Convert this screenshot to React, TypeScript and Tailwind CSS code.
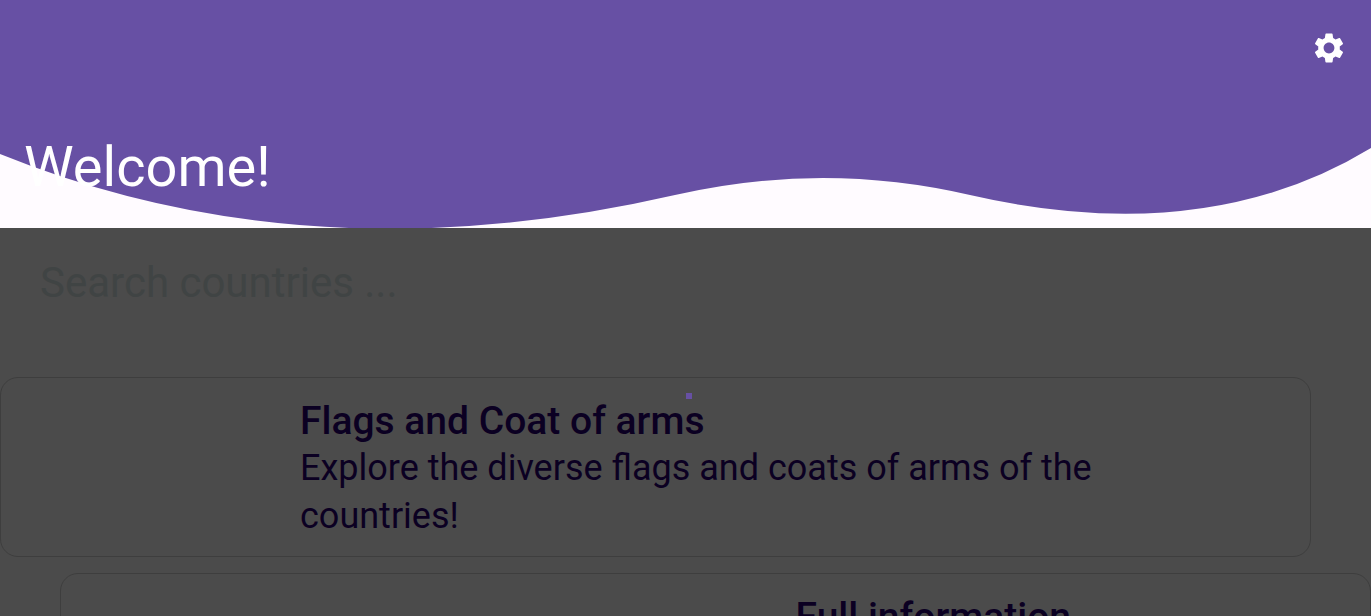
import { MdSettings } from "react-icons/md";

function Header() {
  return (
    <header className="relative h-[228px] shrink-0 bg-[#fffbff]">
      <svg
        className="absolute inset-0 h-full w-full"
        viewBox="0 0 1371 228"
        preserveAspectRatio="none"
        aria-hidden="true"
      >
        <path
          d="M0 0V154Q309 279 675 195Q823 161 970 195Q1205 249 1371 148V0Z"
          fill="#6750a4"
        />
      </svg>
      <div className="relative flex h-full flex-col items-stretch justify-between px-6 pt-[30px] pb-7">
        <button type="button" aria-label="Settings" className="self-end text-white">
          <MdSettings size={36} />
        </button>
        <h1 className="text-[56px] leading-[66px] text-white">Welcome!</h1>
      </div>
    </header>
  );
}

export default function App() {
  return (
    <div className="relative flex h-screen flex-col overflow-hidden bg-[#4b4b4b] font-['Roboto',sans-serif] text-[#0b0022]">
      <Header />
      <main className="flex flex-col">
        <div className="flex h-[149px] shrink-0 items-start px-10 pt-[22px]">
          <input
            type="search"
            aria-label="Search countries"
            placeholder="Search countries ..."
            className="h-16 w-full bg-transparent text-[42px] outline-none placeholder:text-[#404444]"
          />
        </div>
        <div className="flex shrink-0 flex-col gap-4">
          <article className="mr-[60px] h-[180px] shrink-0 rounded-[18px] border border-[#3e3e3e] pt-5 pr-[120px] pl-[299px]">
            <h2 className="text-[39px] leading-[46px] font-medium">Flags and Coat of arms</h2>
            <p className="text-[36px] leading-12">
              Explore the diverse flags and coats of arms of the countries!
            </p>
          </article>
          <article className="ml-[60px] h-[180px] shrink-0 rounded-[18px] border border-[#3e3e3e] pt-5 pr-[299px] pl-[120px] text-right">
            <h2 className="text-[39px] leading-[46px] font-medium">Full information</h2>
          </article>
        </div>
      </main>
      <div
        role="status"
        aria-label="Loading"
        className="absolute top-[393px] left-1/2 size-1.5 bg-[#6750a4]"
      />
    </div>
  );
}
